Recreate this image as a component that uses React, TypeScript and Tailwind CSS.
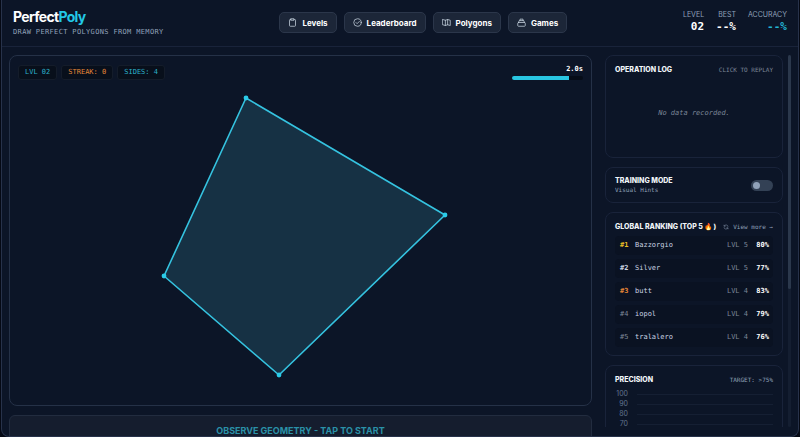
import type { ReactNode } from "react";

const MONO = "font-['DejaVu_Sans_Mono','Liberation_Mono',monospace]";

const NAV_ITEMS: { label: string; icon: ReactNode }[] = [
  {
    label: "Levels",
    icon: (
      <>
        <path d="M8 4H6a2 2 0 0 0-2 2v14a2 2 0 0 0 2 2h12a2 2 0 0 0 2-2V6a2 2 0 0 0-2-2h-2" />
        <path d="M8 2h8v4H8z" />
      </>
    ),
  },
  {
    label: "Leaderboard",
    icon: (
      <>
        <circle cx="12" cy="12" r="10" />
        <path d="M8 12l3 3 6-6" />
      </>
    ),
  },
  {
    label: "Polygons",
    icon: <path d="M2 4l7 2 6-2 7 2v14l-7-2-6 2-7-2zM9 6v14M15 4v14" />,
  },
  {
    label: "Games",
    icon: (
      <>
        <rect x="2" y="12" width="20" height="10" rx="2" />
        <path d="M4 12l2-5h12l2 5M8 7V3h8v4" />
      </>
    ),
  },
];

const STATS = [
  { label: "LEVEL", value: "02", tone: "text-white" },
  { label: "BEST", value: "--%", tone: "text-white" },
  { label: "ACCURACY", value: "--%", tone: "text-[#22b4d4]" },
];

const CHIPS = [
  { text: "LVL 02", tone: "text-[#2bb0c9]" },
  { text: "STREAK: 0", tone: "text-[#e38637]" },
  { text: "SIDES: 4", tone: "text-[#2bb0c9]" },
];

const RANKING = [
  { rank: "#1", name: "Bazzorgio", level: 5, score: "80%", tone: "text-[#e8bd25] font-bold" },
  { rank: "#2", name: "Silver", level: 5, score: "77%", tone: "text-slate-300 font-bold" },
  { rank: "#3", name: "butt", level: 4, score: "83%", tone: "text-[#e38637] font-bold" },
  { rank: "#4", name: "iopol", level: 4, score: "79%", tone: "text-[#7c8798]" },
  { rank: "#5", name: "tralalero", level: 4, score: "76%", tone: "text-[#7c8798]" },
];

const POINTS = [
  [236, 42],
  [435, 159],
  [269, 319],
  [154, 220],
];

const TICKS = [100, 90, 80, 70];

function Card({ className = "", children }: { className?: string; children: ReactNode }) {
  return (
    <section className={`shrink-0 rounded-lg border border-[#19233a] bg-[#0c1527] px-[9px] ${className}`}>
      {children}
    </section>
  );
}

function CardTitle({ children }: { children: ReactNode }) {
  return <h2 className="text-[7px] leading-[10px] font-extrabold whitespace-nowrap text-slate-100">{children}</h2>;
}

function Header() {
  return (
    <header className="flex h-[47px] shrink-0 items-start justify-between border-b border-[#19233a] px-[11px]">
      <div className="pt-2">
        <h1 className="text-[14px] leading-[18px] font-bold tracking-tighter text-white">
          Perfect<span className="text-[#22c8e6]">Poly</span>
        </h1>
        <p className={`${MONO} pt-px text-[7px] leading-[10px] tracking-wider text-slate-400`}>
          DRAW PERFECT POLYGONS FROM MEMORY
        </p>
      </div>
      <nav className="flex gap-[7px] pt-3">
        {NAV_ITEMS.map((item) => (
          <button
            key={item.label}
            type="button"
            className="flex h-[21px] items-center gap-[5px] rounded-[5px] border border-[#2b364a] bg-[#1c2638] px-2 text-[8px] font-bold text-white"
          >
            <svg
              viewBox="0 0 24 24"
              className="size-[9px] text-slate-300"
              fill="none"
              stroke="currentColor"
              strokeWidth="2"
              strokeLinejoin="round"
              strokeLinecap="round"
              aria-hidden="true"
            >
              {item.icon}
            </svg>
            {item.label}
          </button>
        ))}
      </nav>
      <dl className="flex gap-3 pt-[10px] text-right">
        {STATS.map((stat) => (
          <div key={stat.label}>
            <dt className="text-[7px] leading-[10px] text-slate-400">{stat.label}</dt>
            <dd className={`${MONO} text-[11px] leading-[14px] font-bold ${stat.tone}`}>{stat.value}</dd>
          </div>
        ))}
      </dl>
    </header>
  );
}

function Board() {
  return (
    <div className="relative aspect-[5/3] shrink-0 rounded-lg border border-[#253147] bg-[#0c1527]">
      <svg viewBox="0 0 581 349" className="size-full" role="img" aria-label="Target polygon">
        <polygon
          points={POINTS.map((p) => p.join(",")).join(" ")}
          fill="#163144"
          stroke="#35c3e0"
          strokeWidth="1.6"
          strokeLinejoin="round"
        />
        {POINTS.map(([x, y]) => (
          <circle key={x} cx={x} cy={y} r="2.4" fill="#2bcbe8" />
        ))}
      </svg>
      <div className="absolute inset-x-2 top-[9px] flex items-start justify-between">
        <div className="flex gap-1">
          {CHIPS.map((chip) => (
            <span
              key={chip.text}
              className={`${MONO} rounded-[3px] border border-[#141c2a] bg-[#080f1b] px-[6px] py-px text-[7px] leading-[11px] whitespace-nowrap ${chip.tone}`}
            >
              {chip.text}
            </span>
          ))}
        </div>
        <div className="w-[71px]">
          <p className={`${MONO} text-right text-[7px] leading-[9px] font-bold text-white`}>2.0s</p>
          <div className="mt-[2px] h-1 overflow-hidden rounded-xs bg-[#060c17]">
            <div className="h-full w-[80%] bg-[#29c6e2]" />
          </div>
        </div>
      </div>
    </div>
  );
}

function Sidebar() {
  return (
    <aside className="flex w-[186px] shrink-0 gap-[5px] overflow-hidden">
      <div className="flex min-w-0 flex-1 flex-col gap-[9px] overflow-hidden">
        <Card className="flex h-[103px] flex-col py-[9px]">
          <div className="flex items-center justify-between">
            <CardTitle>OPERATION LOG</CardTitle>
            <span className={`${MONO} text-[6px] leading-[10px] text-[#7c8798]`}>CLICK TO REPLAY</span>
          </div>
          <p className={`${MONO} flex flex-1 items-center justify-center pt-1 text-[7px] text-[#7c8798] italic`}>
            No data recorded.
          </p>
        </Card>
        <Card className="flex h-9 items-center justify-between">
          <label htmlFor="training">
            <CardTitle>TRAINING MODE</CardTitle>
            <span className={`${MONO} block text-[6px] leading-[8px] text-slate-400`}>Visual Hints</span>
          </label>
          <input
            id="training"
            type="checkbox"
            role="switch"
            className="flex h-[11px] w-[22px] appearance-none items-center rounded-full bg-[#334155] px-[2px] before:size-[7px] before:rounded-full before:bg-slate-400 checked:justify-end checked:bg-cyan-600"
          />
        </Card>
        <Card className="pt-[9px] pb-1">
          <div className="flex items-center justify-between">
            <CardTitle>GLOBAL RANKING (TOP 5 🔥)</CardTitle>
            <div className="flex items-center gap-1 text-slate-400">
              <button type="button" aria-label="Refresh ranking">
                <svg
                  viewBox="0 0 24 24"
                  className="size-[6px]"
                  fill="none"
                  stroke="currentColor"
                  strokeWidth="2"
                  aria-hidden="true"
                >
                  <path d="M4 3v6h6M20 21v-6h-6M20 11a8 8 0 0 0-15-3M4 13a8 8 0 0 0 15 3" />
                </svg>
              </button>
              <a href="#leaderboard" className={`${MONO} text-[6px] leading-[10px] whitespace-nowrap`}>
                View more →
              </a>
            </div>
          </div>
          <table className={`${MONO} w-full border-separate border-spacing-y-1 text-[7px]`}>
            <tbody>
              {RANKING.map((row) => (
                <tr key={row.rank} className="h-[19px] bg-[#0a1222]">
                  <td className={`w-[20px] rounded-l-sm pl-[5px] ${row.tone}`}>{row.rank}</td>
                  <td className="text-slate-300">{row.name}</td>
                  <td className="text-right text-[#7c8798]">LVL {row.level}</td>
                  <td className="w-[25px] rounded-r-sm pr-1 text-right font-bold text-white">{row.score}</td>
                </tr>
              ))}
            </tbody>
          </table>
        </Card>
        <Card className="py-[9px]">
          <div className="flex items-center justify-between">
            <CardTitle>PRECISION</CardTitle>
            <span className={`${MONO} text-[6px] leading-[10px] text-slate-400`}>TARGET: &gt;75%</span>
          </div>
          <div className="pt-1">
            {TICKS.map((tick) => (
              <div key={tick} className="flex h-[10px] items-center gap-[9px]">
                <span className="w-[13px] text-right text-[7px] leading-[8px] text-slate-500">{tick}</span>
                <span className="h-px flex-1 bg-[#151f33]" />
              </div>
            ))}
          </div>
        </Card>
      </div>
      <div className="w-[3px] shrink-0 rounded-full bg-[#141e31]">
        <div className="h-[63%] rounded-full bg-[#2b384c]" />
      </div>
    </aside>
  );
}

export default function App() {
  return (
    <div className="h-screen bg-[#050914] px-px font-[Inter,sans-serif]">
      <div className="flex h-full flex-col overflow-hidden rounded-b-lg border-x border-b border-[#27324a] bg-[#0c1527]">
        <Header />
        <main className="flex min-h-0 flex-1 gap-[13px] pt-2 pr-[7px] pl-[7px]">
          <div className="flex min-w-0 flex-1 flex-col gap-[9px] overflow-hidden">
            <Board />
            <button
              type="button"
              className="h-8 shrink-0 rounded-t-md border border-[#222c3f] bg-[#151d2e] text-[9px] font-bold text-[#2a91a8]"
            >
              OBSERVE GEOMETRY - TAP TO START
            </button>
          </div>
          <div className="flex min-h-0 pb-[9px]">
            <Sidebar />
          </div>
        </main>
      </div>
    </div>
  );
}
